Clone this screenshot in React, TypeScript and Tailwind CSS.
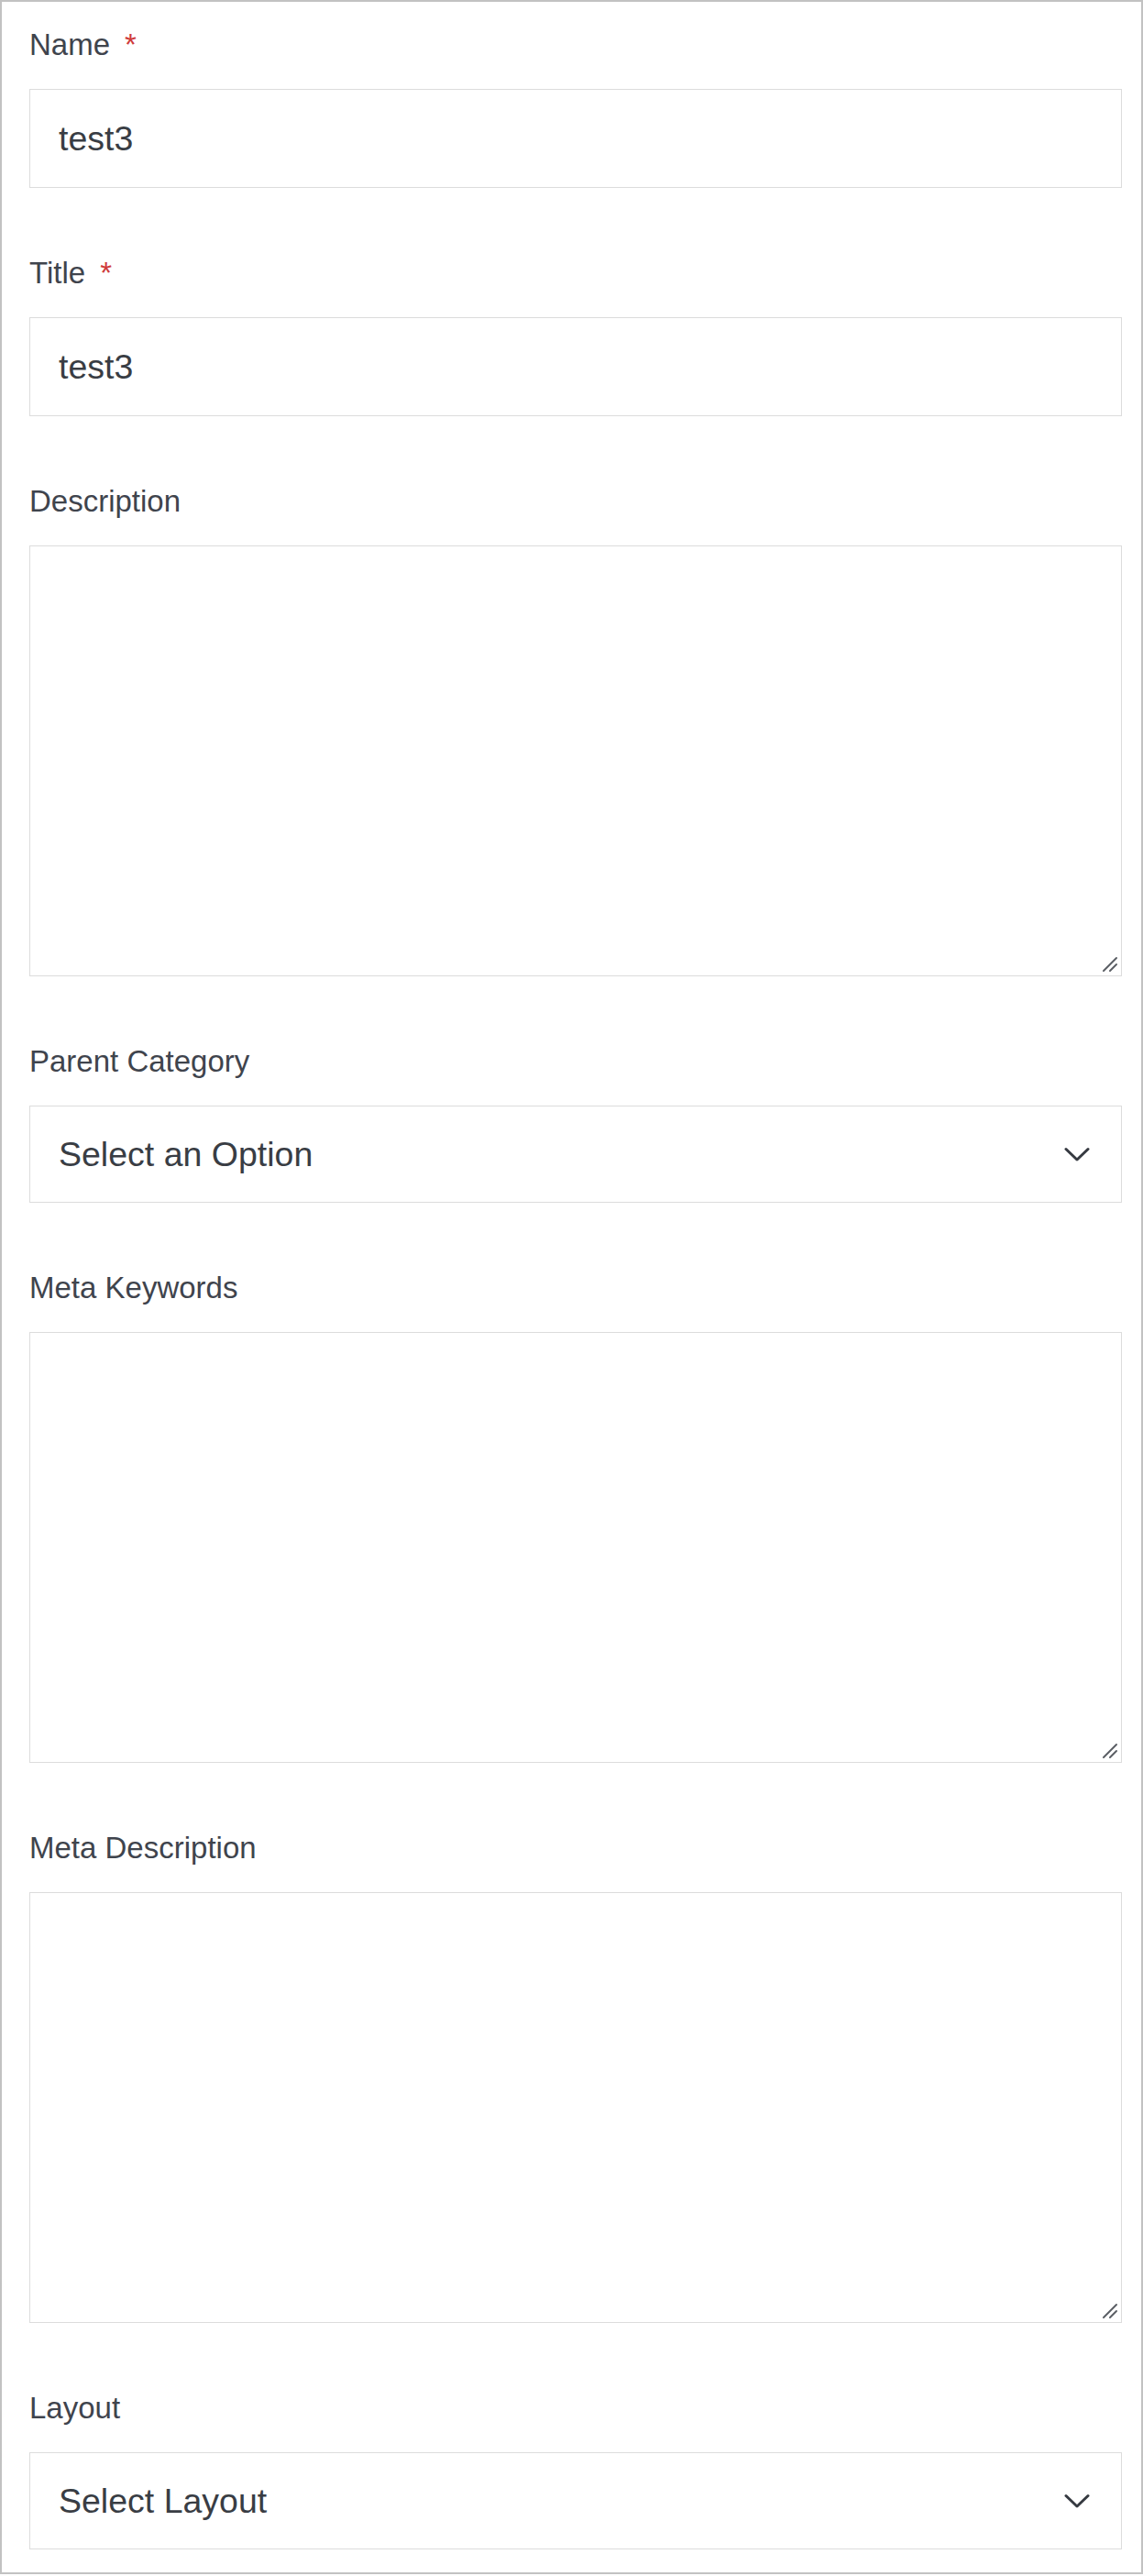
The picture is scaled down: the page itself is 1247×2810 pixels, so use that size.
import React from 'react';

const FONT = { fontFamily: '"Liberation Sans", Arial, sans-serif' };

interface LabelProps {
  text: string;
  required?: boolean;
}

const FieldLabel: React.FC<LabelProps> = ({ text, required }) => (
  <label className="block text-[33px] leading-[38px] text-[#3f444d] mb-[29px]">
    {text}
    {required && <span className="ml-[16px] text-[#cf3b3b]">*</span>}
  </label>
);

const Chevron = () => (
  <svg width="28" height="17" viewBox="0 0 28 17" fill="none" className="shrink-0">
    <polyline points="2,2.5 14,14 26,2.5" stroke="#363a41" strokeWidth="3" strokeLinecap="round" strokeLinejoin="round" />
  </svg>
);

// windows-style resize grip drawn over the corner
const Grip = () => (
  <svg width="18" height="18" viewBox="0 0 18 18" className="absolute right-[4px] bottom-[4px] pointer-events-none">
    <line x1="2" y1="16" x2="16" y2="2" stroke="#5a5e64" strokeWidth="2" strokeLinecap="round" />
    <line x1="9" y1="16" x2="16" y2="9" stroke="#5a5e64" strokeWidth="2" strokeLinecap="round" />
  </svg>
);

const TextInput: React.FC<{ value: string }> = ({ value }) => (
  <input
    type="text"
    defaultValue={value}
    className="block w-full h-[108px] border border-[#dcdcdc] bg-white px-[31px] text-[37.5px] text-[#393d44] outline-none"
    style={FONT}
  />
);

const TextArea = () => (
  <div className="relative">
    <textarea
      className="block w-full h-[470px] border border-[#dcdcdc] bg-white px-[31px] py-[20px] text-[37.5px] text-[#393d44] outline-none resize-none"
      style={FONT}
    />
    <Grip />
  </div>
);

const SelectBox: React.FC<{ placeholder: string }> = ({ placeholder }) => (
  <div className="flex items-center justify-between w-full h-[106px] border border-[#dcdcdc] bg-white pl-[31px] pr-[34px] cursor-pointer">
    <span className="text-[37.5px] text-[#393d44]">{placeholder}</span>
    <Chevron />
  </div>
);

const Field: React.FC<{ children: React.ReactNode; last?: boolean }> = ({ children, last }) => (
  <div className={last ? '' : 'mb-[74px]'}>{children}</div>
);

export default function App() {
  return (
    <div className="bg-white min-h-[2810px]" style={FONT}>
      <form className="border-2 border-[#c2c2c2] pt-[28px] pb-[25px] pl-[30px] pr-[21px]">
        <Field>
          <FieldLabel text="Name" required />
          <TextInput value="test3" />
        </Field>
        <Field>
          <FieldLabel text="Title" required />
          <TextInput value="test3" />
        </Field>
        <Field>
          <FieldLabel text="Description" />
          <TextArea />
        </Field>
        <Field>
          <FieldLabel text="Parent Category" />
          <SelectBox placeholder="Select an Option" />
        </Field>
        <Field>
          <FieldLabel text="Meta Keywords" />
          <TextArea />
        </Field>
        <Field>
          <FieldLabel text="Meta Description" />
          <TextArea />
        </Field>
        <Field last>
          <FieldLabel text="Layout" />
          <SelectBox placeholder="Select Layout" />
        </Field>
      </form>
    </div>
  );
}
